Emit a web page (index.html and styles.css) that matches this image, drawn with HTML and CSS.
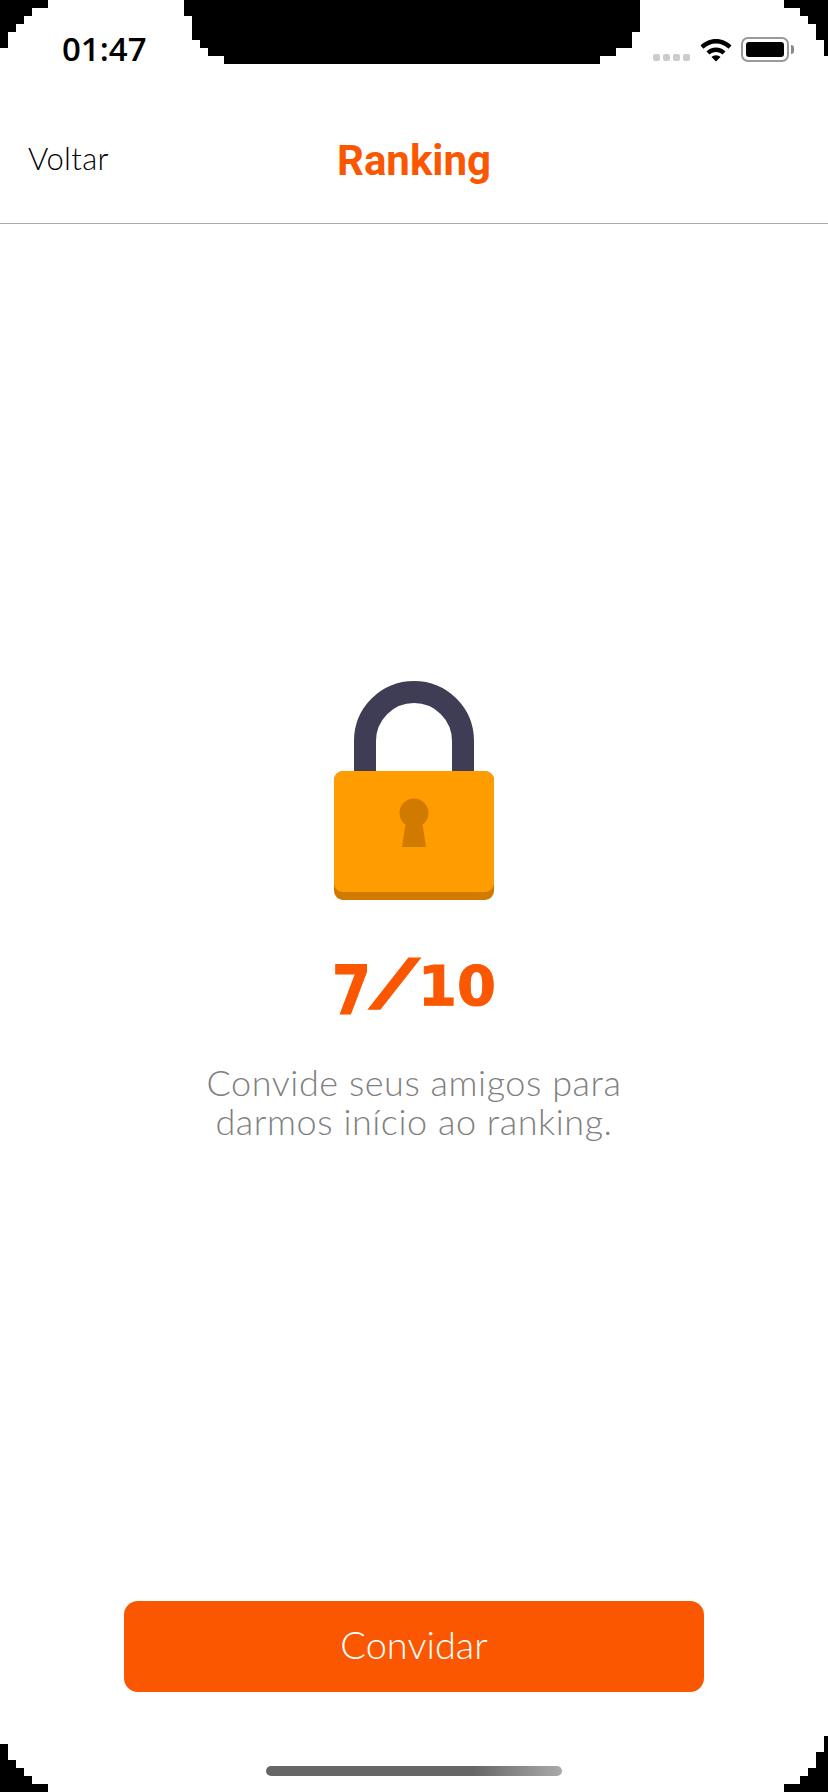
FILE: index.html
```html
<!DOCTYPE html>
<html lang="pt-BR">
<head>
  <meta charset="UTF-8" />
  <meta name="viewport" content="width=device-width, initial-scale=1.0" />
  <title>Ranking</title>
  <link rel="stylesheet" href="styles.css">
</head>
<body>
  <div class="tela">
    <div class="status">
      <span class="hora">01:47</span>
      <div class="status-icones">
        <div class="sinal"><i></i><i></i><i></i><i></i></div>
        <svg class="wifi" width="32" height="25" viewBox="0 0 32 25">
          <path d="M0.5 8.6C4.6 4.4 10 2 16 2s11.400 2.400 15.500 6.600l-3 3.200C25 8.300 20.700 6.400 16 6.400S7 8.300 3.500 11.800z" fill="#000"/>
          <path d="M6.500 14.500C9 12 12.300 10.500 16 10.500s7 1.500 9.500 4l-3 3.100C20.800 16 18.500 15 16 15s-4.800 1-6.500 2.600z" fill="#000"/>
          <path d="M11.500 20c1.200-1.100 2.800-1.800 4.500-1.800s3.300 .7 4.500 1.800L16 24.500z" fill="#000"/>
        </svg>
        <div class="bateria"><div class="carga"></div></div>
        <div class="bateria-ponta"></div>
      </div>
    </div>

    <div class="topo">
      <span class="voltar">Voltar</span>
      <h1 class="titulo">Ranking</h1>
    </div>

    <div class="conteudo">
      <svg class="cadeado" width="160" height="219" viewBox="0 0 160 219">
        <path d="M31 100V60a49 49 0 0 1 98 0v40" fill="none" stroke="#3f3d56" stroke-width="22"/>
        <rect x="0" y="90" width="160" height="129" rx="9" fill="#d17a00"/>
        <rect x="0" y="90" width="160" height="121" rx="9" fill="#ff9d00"/>
        <circle cx="80" cy="132" r="14.500" fill="#d17a00"/>
        <path d="M72 140h16l4 26H68z" fill="#d17a00"/>
      </svg>
      <div class="contagem"><span class="sete">7</span><span class="barra">/</span><span>10</span></div>
      <p class="texto">Convide seus amigos para<br>darmos início ao ranking.</p>
      <button class="botao">Convidar</button>
      <div class="home"></div>
    </div>

    <svg class="moldura" width="828" height="1792" viewBox="0 0 828 1792">
      <path d="M0 0H48V8H32V16H24V24H16V32H8V48H0z"/>
      <path d="M828 0H784V8H800V16H808V24H816V40H824V56H828z"/>
      <path d="M184 0H640V32H632V48H616V56H600V64H224V56H208V48H200V40H192V16H184z"/>
      <path d="M0 1744H8V1760H16V1768H24V1776H32V1784H48V1792H0z"/>
      <path d="M828 1736H824V1752H816V1768H808V1776H800V1784H784V1792H828z"/>
    </svg>
  </div>
</body>
</html>
```

FILE: styles.css
```css
* {
  box-sizing: border-box;
}
body {
  margin: 0;
  background: #fff;
  font-family: "Lato", sans-serif;
}
.tela {
  position: relative;
  width: 828px;
  height: 1792px;
  display: flex;
  flex-direction: column;
  overflow: hidden;
}
.moldura {
  position: absolute;
  top: 0;
  left: 0;
  fill: #000;
}
.status {
  height: 80px;
  display: flex;
  justify-content: space-between;
  padding: 27px 34px 0 62px;
}
.hora {
  font-family: "Open Sans", sans-serif;
  font-size: 33px;
  font-weight: 600;
  line-height: 44px;
  color: #000;
}
.status-icones {
  display: flex;
  align-items: flex-start;
  padding-top: 10px;
}
.sinal {
  display: flex;
  gap: 3px;
  margin-top: 17px;
  margin-right: 10px;
}
.sinal i {
  width: 7px;
  height: 7px;
  border-radius: 2px;
  background: #ccc;
}
.wifi {
  margin-right: 9px;
}
.bateria {
  width: 48px;
  height: 25px;
  border: 2px solid #999;
  border-radius: 7px;
  padding: 3px;
}
.carga {
  height: 100%;
  background: #000;
  border-radius: 3px;
}
.bateria-ponta {
  width: 3px;
  height: 9px;
  margin: 8px 0 0 2px;
  background: #888;
  border-radius: 0 3px 3px 0;
}
.topo {
  position: relative;
  height: 144px;
  padding-top: 18px;
  border-bottom: 1px solid #aaa;
  display: flex;
  align-items: center;
  justify-content: center;
}
.voltar {
  position: absolute;
  left: 28px;
  top: 60px;
  font-size: 31px;
  font-weight: 300;
  letter-spacing: 0.3px;
  line-height: 36px;
  color: #000;
}
.titulo {
  margin: 0;
  font-family: "Roboto", sans-serif;
  font-size: 42px;
  font-weight: 700;
  color: #fa5700;
}
.conteudo {
  flex: 1;
  display: flex;
  flex-direction: column;
  align-items: center;
  padding-top: 457px;
}
.cadeado {
  display: block;
}
.contagem {
  margin-top: 50px;
  height: 72px;
  font-family: "DejaVu Sans", sans-serif;
  font-size: 56px;
  font-weight: 700;
  line-height: 72px;
  color: #fa5700;
  white-space: nowrap;
  -webkit-text-stroke: 1px #fa5700;
}
.sete {
  display: inline-block;
  vertical-align: -9px;
  transform: scaleY(1.22);
  transform-origin: 0 55px;
}
.barra {
  display: inline-block;
  width: 24px;
  margin: 0 11px 0 12px;
  font-size: 61px;
  line-height: 40px;
  text-align: center;
  vertical-align: 2px;
  transform: scaleX(1.5) skewX(-12deg);
  -webkit-text-stroke: 2px #fa5700;
}
.texto {
  margin: 41px 0 0;
  font-size: 36px;
  font-weight: 300;
  letter-spacing: 0.55px;
  line-height: 39px;
  text-align: center;
  color: #808080;
}
.botao {
  margin-top: auto;
  width: 580px;
  height: 91px;
  padding-bottom: 6px;
  border: none;
  border-radius: 14px;
  background: #fa5700;
  color: #fff;
  font-family: "Lato", sans-serif;
  font-size: 38px;
  font-weight: 300;
}
.home {
  width: 296px;
  height: 10px;
  margin: 74px 0 16px;
  border-radius: 5px;
  background: linear-gradient(90deg, #666 0%, #666 70%, #aaa 100%);
}
```
